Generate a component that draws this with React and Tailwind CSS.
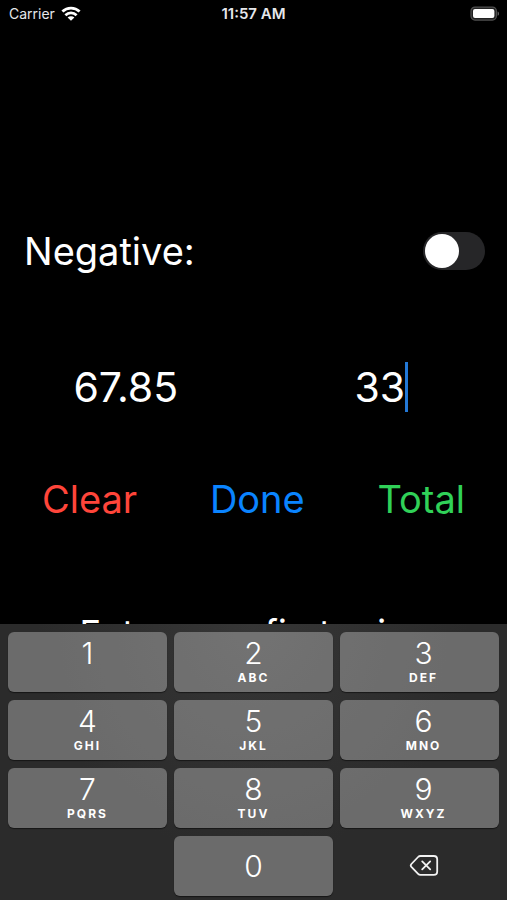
import React, { useState } from 'react';

const keys = [
  { digit: '1', letters: '' },
  { digit: '2', letters: 'ABC' },
  { digit: '3', letters: 'DEF' },
  { digit: '4', letters: 'GHI' },
  { digit: '5', letters: 'JKL' },
  { digit: '6', letters: 'MNO' },
  { digit: '7', letters: 'PQRS' },
  { digit: '8', letters: 'TUV' },
  { digit: '9', letters: 'WXYZ' },
];

const keyClass =
  'h-[60px] rounded-[6px] bg-white/30 shadow-[0_1px_1px_rgba(0,0,0,0.5)] flex flex-col items-center text-white active:bg-white/20';

const StatusBar = () => (
  <header className="grid grid-cols-3 items-center h-7 px-2 text-sm text-gray-200">
    <div className="flex items-center gap-1.5 pl-px">
      <span>Carrier</span>
      <svg className="w-5 h-4" viewBox="0 0 20 16" fill="none" stroke="#fff" strokeWidth="2.8">
        <path d="M1.4 5.6C6.2 1 13.8 1 18.6 5.6" />
        <path d="M4.4 9.2C7.6 6.2 12.4 6.2 15.6 9.2" />
        <path d="M10 14.8L6.6 11.4C8.4 9.9 11.6 9.9 13.4 11.4Z" fill="#fff" stroke="none" />
      </svg>
    </div>
    <span className="text-center text-[15px] font-semibold">11:57 AM</span>
    <svg className="w-[30px] h-4 justify-self-end" viewBox="0 0 30 16">
      <rect x="2" y="1.1" width="25.4" height="13" rx="4" fill="#222" stroke="#505050" strokeWidth="1.2" />
      <rect x="4" y="3.1" width="21.4" height="9" rx="2" fill="#fff" />
      <path d="M28.6 5.6C30.4 6.2 30.4 9.2 28.6 9.8Z" fill="#6a6a6a" />
    </svg>
  </header>
);

const Keypad = ({ onDigit, onDelete }) => (
  <section className="grid grid-cols-3 gap-x-[7px] gap-y-2 px-2 pt-2 pb-1 bg-[#2b2b2b] bg-[radial-gradient(ellipse_at_top,#363636,#2b2b2b_60%)]">
    {keys.map(({ digit, letters }) => (
      <button key={digit} type="button" className={`${keyClass} nth-[3n]:pl-2`} onClick={() => onDigit(digit)}>
        <span className="pt-[3px] text-[30px] leading-9 font-[350]">{digit}</span>
        {letters && <span className="text-xs leading-[14px] font-bold tracking-[2px]">{letters}</span>}
      </button>
    ))}
    <button type="button" className={`${keyClass} col-start-2 justify-center`} onClick={() => onDigit('0')}>
      <span className="text-[30px] leading-9 font-[350]">0</span>
    </button>
    <button type="button" aria-label="Delete" className="flex items-center justify-center pl-2" onClick={onDelete}>
      <svg className="w-[30px] h-6" viewBox="0 0 30 24" fill="none" stroke="#f2f2f2" strokeWidth="1.8" strokeLinecap="round" strokeLinejoin="round">
        <path d="M11.4 2H24.8C27 2 28.2 3.2 28.2 5.4V17.4C28.2 19.6 27 20.8 24.8 20.8H11.4C10.4 20.8 9.8 20.5 9.1 19.8L2.4 12.8C1.4 11.7 1.4 11.1 2.4 10L9.1 3C9.8 2.3 10.4 2 11.4 2Z" />
        <path d="M13.2 7.4L21.2 15.4M21.2 7.4L13.2 15.4" />
      </svg>
    </button>
  </section>
);

const App = () => {
  const [negative, setNegative] = useState(false);
  const [first, setFirst] = useState('67.85');
  const [second, setSecond] = useState('33');

  const handleClear = () => {
    setFirst('');
    setSecond('');
  };

  const handleTotal = () => {
    const sum = Number(first) + (negative ? -Number(second) : Number(second));
    setFirst(sum.toFixed(2));
    setSecond('');
  };

  return (
    <div className="h-screen flex flex-col bg-black text-white font-['Inter',sans-serif]">
      <StatusBar />

      <main className="flex-1 min-h-0 overflow-hidden pt-[198px] text-[38px] leading-[50px]">
        <label className="flex items-center justify-between pl-6 pr-[22px]">
          <span>Negative:</span>
          <input
            type="checkbox"
            role="switch"
            checked={negative}
            onChange={(e) => setNegative(e.target.checked)}
            className="appearance-none w-[62px] h-[38px] rounded-full bg-[#262628] p-[2px] checked:bg-[#30d158] before:block before:size-[34px] before:rounded-full before:bg-white checked:before:ml-6"
          />
        </label>

        <div className="grid grid-cols-2 gap-x-1 mt-[86px] text-[41px]">
          <div className="flex justify-center">
            <input
              aria-label="First price"
              inputMode="decimal"
              value={first}
              onChange={(e) => setFirst(e.target.value)}
              className="[field-sizing:content] outline-none"
            />
          </div>
          <div className="flex justify-center">
            <input
              aria-label="Second price"
              inputMode="decimal"
              value={second}
              onChange={(e) => setSecond(e.target.value)}
              className="[field-sizing:content] outline-none caret-transparent"
            />
            <span className="w-[3px] bg-[#2378d6]" />
          </div>
        </div>

        <div className="flex justify-between mt-[62px] px-[42px]">
          <button type="button" className="text-[#ff453a]" onClick={handleClear}>Clear</button>
          <button type="button" className="text-[#0a84ff]">Done</button>
          <button type="button" className="text-[#30d158]" onClick={handleTotal}>Total</button>
        </div>

        <p className="mt-[84px] text-center text-[36px] whitespace-nowrap">Enter your first price</p>
      </main>

      <Keypad
        onDigit={(digit) => setSecond(second + digit)}
        onDelete={() => setSecond(second.slice(0, -1))}
      />
    </div>
  );
};

export default App;
